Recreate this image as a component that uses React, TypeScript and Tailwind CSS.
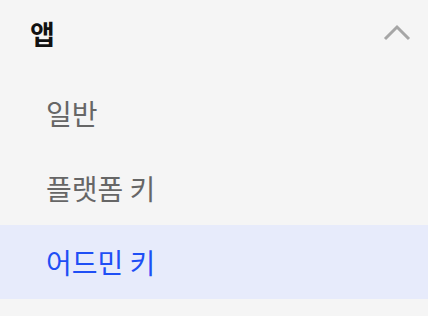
import React from "react";

export default function App() {
  const font = { fontFamily: '"Noto Sans CJK KR", "Noto Sans", sans-serif' };
  return (
    <div className="w-[428px] h-[316px] bg-[#f5f5f5] overflow-hidden" style={font}>
      <div className="h-[76px] flex items-start justify-between pt-[14px] pl-[30px] pr-[17px]">
        <span className="text-[27px] leading-[40px] font-bold text-[#111111]">앱</span>
        <svg width="28" height="18" viewBox="0 0 28 18" className="mt-[10px]">
          <path d="M2 15 L14 3 L26 15" fill="none" stroke="#a6a6a6" strokeWidth="3" />
        </svg>
      </div>
      <div className="flex flex-col">
        <div className="h-[74px] flex items-center pl-[46px] text-[28px] text-[#666666]">일반</div>
        <div className="h-[75px] flex items-center pl-[46px] text-[28px] text-[#666666]">플랫폼 키</div>
        <div className="h-[74px] flex items-center pl-[46px] text-[28px] text-[#1f4ff5] bg-[#e7ebfb]">어드민 키</div>
      </div>
    </div>
  );
}
